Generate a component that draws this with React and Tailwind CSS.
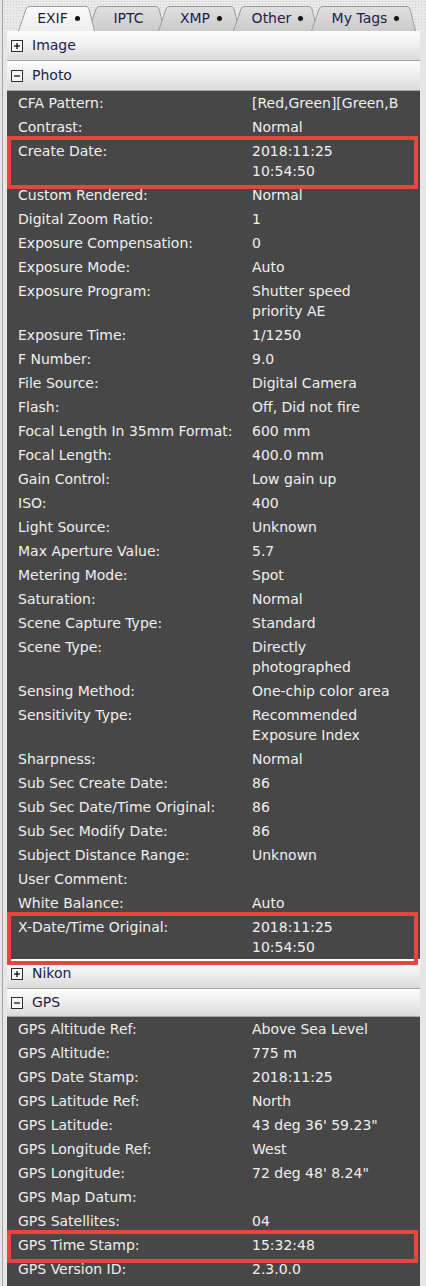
import React from 'react';

const photoRows = [
  ['CFA Pattern:', '[Red,Green][Green,Blue]', false, true],
  ['Contrast:', 'Normal'],
  ['Create Date:', '2018:11:25 10:54:50', true],
  ['Custom Rendered:', 'Normal'],
  ['Digital Zoom Ratio:', '1'],
  ['Exposure Compensation:', '0'],
  ['Exposure Mode:', 'Auto'],
  ['Exposure Program:', 'Shutter speed priority AE'],
  ['Exposure Time:', '1/1250'],
  ['F Number:', '9.0'],
  ['File Source:', 'Digital Camera'],
  ['Flash:', 'Off, Did not fire'],
  ['Focal Length In 35mm Format:', '600 mm'],
  ['Focal Length:', '400.0 mm'],
  ['Gain Control:', 'Low gain up'],
  ['ISO:', '400'],
  ['Light Source:', 'Unknown'],
  ['Max Aperture Value:', '5.7'],
  ['Metering Mode:', 'Spot'],
  ['Saturation:', 'Normal'],
  ['Scene Capture Type:', 'Standard'],
  ['Scene Type:', 'Directly photographed'],
  ['Sensing Method:', 'One-chip color area'],
  ['Sensitivity Type:', 'Recommended Exposure Index'],
  ['Sharpness:', 'Normal'],
  ['Sub Sec Create Date:', '86'],
  ['Sub Sec Date/Time Original:', '86'],
  ['Sub Sec Modify Date:', '86'],
  ['Subject Distance Range:', 'Unknown'],
  ['User Comment:', ''],
  ['White Balance:', 'Auto'],
  ['X-Date/Time Original:', '2018:11:25 10:54:50', true],
];

const gpsRows = [
  ['GPS Altitude Ref:', 'Above Sea Level'],
  ['GPS Altitude:', '775 m'],
  ['GPS Date Stamp:', '2018:11:25'],
  ['GPS Latitude Ref:', 'North'],
  ['GPS Latitude:', '43 deg 36\' 59.23"'],
  ['GPS Longitude Ref:', 'West'],
  ['GPS Longitude:', '72 deg 48\' 8.24"'],
  ['GPS Map Datum:', ''],
  ['GPS Satellites:', '04'],
  ['GPS Time Stamp:', '15:32:48', true],
  ['GPS Version ID:', '2.3.0.0'],
];

const tabs = [
  { id: 'exif', label: 'EXIF', dot: true, w: 77, active: true },
  { id: 'iptc', label: 'IPTC', dot: false, w: 77 },
  { id: 'xmp', label: 'XMP', dot: true, w: 82 },
  { id: 'other', label: 'Other', dot: true, w: 85 },
  { id: 'mytags', label: 'My Tags', dot: true, w: 105 },
];

function Tab({ id, label, dot, w, active, first }) {
  const h = 25;
  return (
    <div
      className={`relative flex items-center justify-center shrink-0 ${first ? '' : '-ml-[7px]'} ${active ? 'z-10' : ''}`}
      style={{ width: w, height: h }}
    >
      <svg className="absolute inset-0" width={w} height={h} viewBox={`0 0 ${w} ${h}`}>
        <defs>
          <linearGradient id={`tg-${id}`} x1="0" y1="0" x2="0" y2="1">
            <stop offset="0" stopColor={active ? '#fbfbfb' : '#e0e0e0'} />
            <stop offset="1" stopColor={active ? '#ededed' : '#cbcbcb'} />
          </linearGradient>
        </defs>
        <path
          d={`M0.5 ${h} L8 3 Q9 0.5 12 0.5 L${w - 9} 0.5 Q${w - 7} 0.5 ${w - 6} 3 L${w - 0.5} ${h}`}
          fill={`url(#tg-${id})`}
          stroke="#9c9c9c"
          strokeWidth="1"
        />
      </svg>
      <span className="relative flex items-center text-[14px] text-[#1d1d4b] pl-[4px]">
        {label}
        {dot && <span className="ml-[7px] w-[5px] h-[5px] rounded-full bg-[#111]" />}
      </span>
    </div>
  );
}

function Section({ open, title, short }) {
  return (
    <div className={`${short ? 'h-[28px]' : 'h-[30px]'} flex items-center gap-[9px] pl-[4px] border-b border-[#a7a7a7] bg-gradient-to-b from-[#fdfdfd] via-[#eeeeee] to-[#dadada]`}>
      <svg width="12" height="12" viewBox="0 0 12 12">
        <rect x="0.5" y="0.5" width="11" height="11" fill="#f8f8f8" stroke="#2d2d2d" />
        <path d="M3 6h6" stroke="#111" strokeWidth="1.3" />
        {!open && <path d="M6 3v6" stroke="#111" strokeWidth="1.3" />}
      </svg>
      <span className="text-[14px] text-[#1d1d4b]">{title}</span>
    </div>
  );
}

function Row({ label, value, marked, nowrap }) {
  return (
    <div className="relative grid grid-cols-[234px_146px] pl-[11px] py-[2px] leading-[20px] text-[14px] text-[#efefef]">
      <span className="whitespace-nowrap">{label}</span>
      <span className={`overflow-hidden ${nowrap ? 'whitespace-nowrap' : ''}`}>{value}</span>
      {marked && (
        <div className="absolute -top-[3px] -bottom-[6px] left-0 right-[2px] border-4 border-[#e8453e]" />
      )}
    </div>
  );
}

export default function App() {
  return (
    <div className="w-[426px] h-[1286px] overflow-hidden bg-[#e6e6e6] pl-[2px] font-['DejaVu_Sans',sans-serif]">
      <div className="h-full border-l border-[#a5a5a5] flex flex-col">
        {/* tab strip */}
        <div className="h-[31px] shrink-0 flex items-end pl-[15px] bg-[#e9e9e9] [background-image:radial-gradient(#cfcfcf_0.8px,transparent_0.8px)] [background-size:3px_3px]">
          {tabs.map((t, i) => (
            <Tab key={t.id} {...t} first={i === 0} />
          ))}
        </div>

        <div className="flex-1 pl-[4px] pr-[6px] bg-[#e6e6e6]">
          <div className="bg-[#474747] h-full">
            <Section open={false} title="Image" />
            <Section open title="Photo" />
            {photoRows.map(([l, v, m, nw]) => (
              <Row key={l} label={l} value={v} marked={m} nowrap={nw} />
            ))}
            <Section open={false} title="Nikon" />
            <Section open short title="GPS" />
            {gpsRows.map(([l, v, m]) => (
              <Row key={l} label={l} value={v} marked={m} />
            ))}
          </div>
        </div>
      </div>
    </div>
  );
}
